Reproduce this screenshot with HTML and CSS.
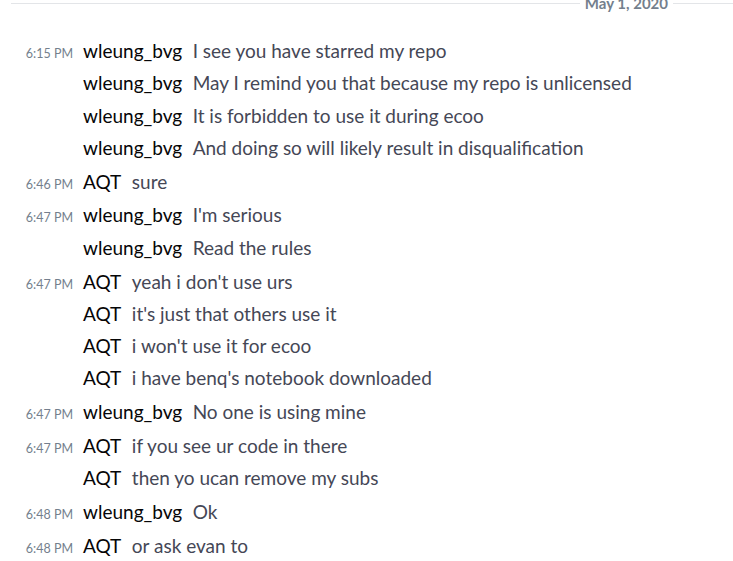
FILE: index.html
```html
<!DOCTYPE html>
<html>
<head>
<meta charset="utf-8">
<link rel="stylesheet" href="styles.css">
</head>
<body>
<div class="chat">
  <div class="divider"><span class="line"></span><span class="date">May 1, 2020</span><span class="line right"></span></div>
  <div class="messages">
    <div class="msg group"><span class="time">6:15 PM</span><span class="user">wleung_bvg</span><span class="text">I see you have starred my repo</span></div>
    <div class="msg"><span class="time"></span><span class="user">wleung_bvg</span><span class="text">May I remind you that because my repo is unlicensed</span></div>
    <div class="msg"><span class="time"></span><span class="user">wleung_bvg</span><span class="text">It is forbidden to use it during ecoo</span></div>
    <div class="msg"><span class="time"></span><span class="user">wleung_bvg</span><span class="text">And doing so will likely result in disqualification</span></div>
    <div class="msg group"><span class="time">6:46 PM</span><span class="user">AQT</span><span class="text">sure</span></div>
    <div class="msg group"><span class="time">6:47 PM</span><span class="user">wleung_bvg</span><span class="text">I'm serious</span></div>
    <div class="msg"><span class="time"></span><span class="user">wleung_bvg</span><span class="text">Read the rules</span></div>
    <div class="msg group"><span class="time">6:47 PM</span><span class="user">AQT</span><span class="text">yeah i don't use urs</span></div>
    <div class="msg"><span class="time"></span><span class="user">AQT</span><span class="text">it's just that others use it</span></div>
    <div class="msg"><span class="time"></span><span class="user">AQT</span><span class="text">i won't use it for ecoo</span></div>
    <div class="msg"><span class="time"></span><span class="user">AQT</span><span class="text">i have benq's notebook downloaded</span></div>
    <div class="msg group"><span class="time">6:47 PM</span><span class="user">wleung_bvg</span><span class="text">No one is using mine</span></div>
    <div class="msg group"><span class="time">6:47 PM</span><span class="user">AQT</span><span class="text">if you see ur code in there</span></div>
    <div class="msg"><span class="time"></span><span class="user">AQT</span><span class="text">then yo ucan remove my subs</span></div>
    <div class="msg group"><span class="time">6:48 PM</span><span class="user">wleung_bvg</span><span class="text">Ok</span></div>
    <div class="msg group"><span class="time">6:48 PM</span><span class="user">AQT</span><span class="text">or ask evan to</span></div>
  </div>
</div>
</body>
</html>
```
FILE: styles.css
```css
html, body {
  margin: 0;
  padding: 0;
  background: #ffffff;
}
body {
  font-family: Lato, "Noto Sans", sans-serif;
  overflow: hidden;
}
.chat {
  width: 733px;
  height: 561px;
  overflow: hidden;
}
.divider {
  display: flex;
  align-items: center;
  gap: 5px;
  height: 20px;
  margin-top: -7px;
  padding-left: 11px;
}
.divider .line {
  flex: 1;
  height: 1px;
  background: #e3e5e8;
}
.divider .line.right {
  flex: 0 0 60px;
}
.date {
  font-size: 15px;
  font-weight: 700;
  color: #747f8d;
}
.messages {
  padding-top: 22px;
}
.msg {
  display: flex;
  align-items: baseline;
  height: 32.3px;
  line-height: 32.3px;
  font-size: 19px;
}
.msg.group {
  margin-top: 1.5px;
}
.msg.group:first-child {
  margin-top: 0;
}
.time {
  flex: 0 0 73px;
  text-align: right;
  font-size: 12.5px;
  color: #747f8d;
  padding-right: 10px;
  box-sizing: content-box;
}
.user {
  color: #060607;
  font-size: 19px;
  font-weight: 400;
  margin-right: 10.5px;
}
.text {
  color: #454756;
}
```
